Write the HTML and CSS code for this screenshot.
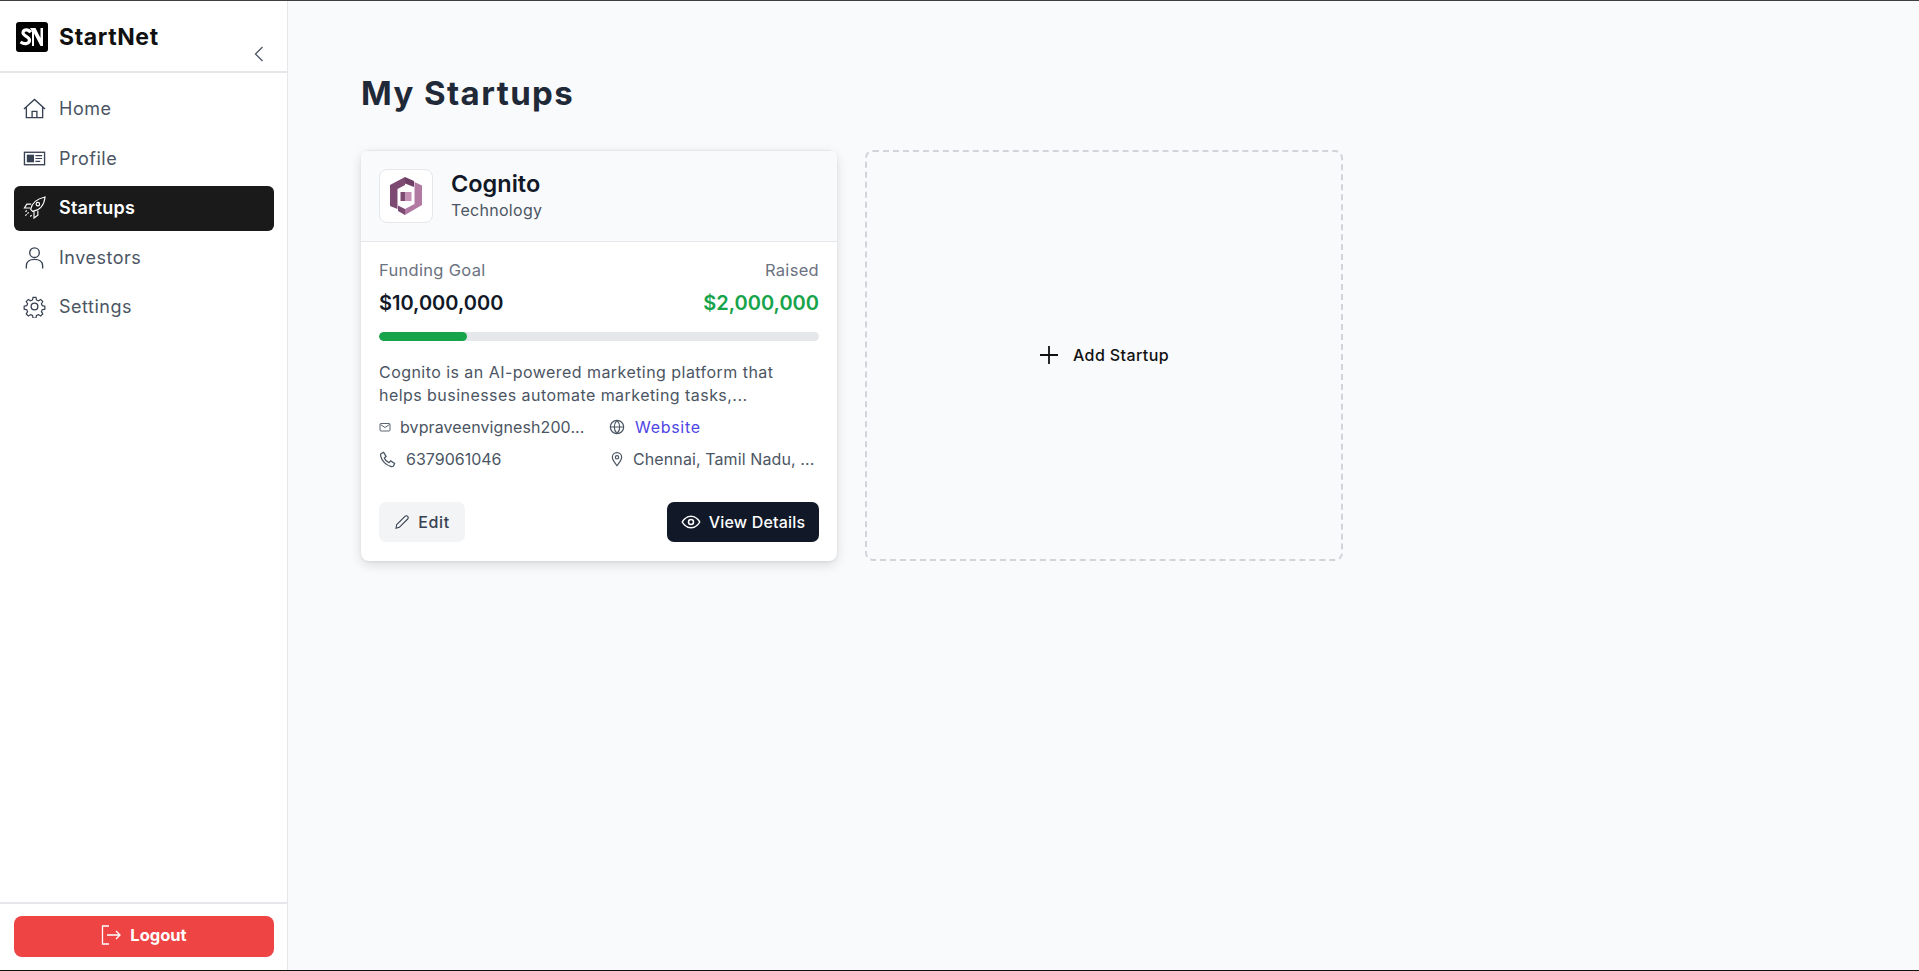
FILE: index.html
```html
<!DOCTYPE html>
<html lang="en">
<head>
<meta charset="utf-8">
<title>StartNet</title>
<link rel="stylesheet" href="styles.css">
</head>
<body>
<div class="app">
  <aside class="sidebar">
    <div class="brand">
      <div class="brand-row">
        <svg class="brand-logo" viewBox="0 0 32 30"><rect width="32" height="30" rx="3" fill="#000"/><path d="M14.500 10.500C13 7 7.500 7 7 10.500c-.4 3.500 6.500 4 6.500 7.500 0 3.500-4.500 5-9 2" fill="none" stroke="#fff" stroke-width="3.200"/><path d="M14 6h5.500l5 10V6h2.500v18h-2.500L18 11.500V24h-2V9.500z" fill="#fff"/></svg>
        <span class="brand-name">StartNet</span>
      </div>
      <svg class="collapse" viewBox="0 0 10 16"><path d="M8.500 1 1.500 8l7 7" fill="none" stroke="#4b5563" stroke-width="1.300"/></svg>
    </div>
    <nav class="nav">
      <a class="nav-item">
        <svg class="nav-icon" viewBox="0 0 24 24"><path d="M1 12.500 12 2.500l11 10M3.500 10v11.500h17V10M9.500 21.500V15h5v6.500" /></svg>
        <span>Home</span>
      </a>
      <a class="nav-item">
        <svg class="nav-icon" viewBox="0 0 24 24"><rect x="1.500" y="5.500" width="21" height="13" /><rect x="4" y="8" width="7.500" height="8" fill="#374151" stroke="none"/><path d="M13 9h7M13 12h7M13 15h5" stroke-width="1.200"/></svg>
        <span>Profile</span>
      </a>
      <a class="nav-item active">
        <svg class="nav-icon rocket" viewBox="0 0 24 24"><path d="M8 14c1-6 6-11 15-13-1 9-6 14-13 15zM8.500 8.500H4L1.500 12.500h6M15.500 15.500V20L11.500 23v-6.500"/><circle cx="15.500" cy="8.500" r="1.800"/><path d="M6 17l-4 4M4 15l-2 2M9 20l-2 2" stroke-dasharray="2 1"/></svg>
        <span>Startups</span>
      </a>
      <a class="nav-item">
        <svg class="nav-icon" viewBox="0 0 24 24"><circle cx="12" cy="7" r="5"/><path d="M3.500 23.500v-3c0-4 3.500-6.500 8.500-6.500s8.500 2.500 8.500 6.500v3"/></svg>
        <span>Investors</span>
      </a>
      <a class="nav-item">
        <svg class="nav-icon" viewBox="0 0 24 24"><circle cx="12" cy="12" r="3.500"/><path d="M10.300 2.500h3.400l.6 3 2.300 1 2.600-1.600 2.400 2.400-1.600 2.600 1 2.300 3 .6v3.400l-3 .6-1 2.300 1.600 2.600-2.400 2.400-2.600-1.600-2.300 1-.6 3h-3.400l-.6-3-2.300-1-2.600 1.600-2.400-2.400 1.600-2.600-1-2.300-3-.6v-3.400l3-.6 1-2.300-1.600-2.600 2.400-2.400 2.600 1.600 2.300-1z" transform="translate(1.200 .2) scale(.9)"/></svg>
        <span>Settings</span>
      </a>
    </nav>
    <div class="sidebar-foot">
      <button class="logout">
        <svg class="logout-icon" viewBox="0 0 20 20"><path d="M8 1H1.500v18H8M6 10h13M15 6l4 4-4 4"/></svg>
        Logout
      </button>
    </div>
  </aside>
  <main class="main">
    <h1 class="title">My Startups</h1>
    <div class="cards">
      <article class="card">
        <header class="card-head">
          <div class="card-logo">
            <svg viewBox="0 0 32 38" width="32" height="38">
              <path d="M15 0 0 8v21l7.500 3V12L15 8z" fill="#7d4a72"/>
              <path d="M15 0l9 4v6l-9-3.500z" fill="#6f3f66"/>
              <path d="M24.500 5l7.500 3.500V28L15 38v-6l9.500-5z" fill="#b27aa3"/>
              <path d="M8 28.500 15 32v6l-7-4z" fill="#7d4a72"/>
              <path d="M10.500 15h5v9h-5z" fill="#7d4a72"/>
              <path d="M15.500 15h6v9h-6z" fill="#c58fb6"/>
            </svg>
          </div>
          <div class="card-id">
            <h2 class="card-name">Cognito</h2>
            <p class="card-cat">Technology</p>
          </div>
        </header>
        <div class="card-body">
          <div class="split labels"><span>Funding Goal</span><span>Raised</span></div>
          <div class="split amounts"><span>$10,000,000</span><span class="raised">$2,000,000</span></div>
          <div class="progress"><div class="progress-fill" style="width:20%"></div></div>
          <p class="desc">Cognito is an AI-powered marketing platform that helps businesses automate marketing tasks,...</p>
          <div class="contacts">
            <div class="contact">
              <svg class="ci ci-sm" viewBox="0 0 24 24"><rect x="2" y="5" width="20" height="15" rx="2"/><path d="m3 7 9 6 9-6"/></svg>
              <span class="contact-text">bvpraveenvignesh200...</span>
            </div>
            <div class="contact">
              <svg class="ci" viewBox="0 0 24 24"><circle cx="12" cy="12" r="10"/><path d="M2 12h20M12 2c-5.500 6-5.500 14 0 20M12 2c5.500 6 5.500 14 0 20"/></svg>
              <span class="contact-text link">Website</span>
            </div>
            <div class="contact">
              <svg class="ci ci-lg" viewBox="0 0 24 24"><path d="M3 3.500 6.500 2 10 7.500 7.500 10c1 2.500 4 5.500 6.500 6.500l2.500-2.500 5.500 3.500-1.500 3.500c-1 1-2.500 1.200-4 .8C10 20 4 14 2.500 7.500 2.100 6 2 4.500 3 3.500z"/></svg>
              <span class="contact-text phone">6379061046</span>
            </div>
            <div class="contact place">
              <svg class="ci" viewBox="0 0 24 24"><path d="M12 22c-4-5-7-8.500-7-12.500a7 7 0 0 1 14 0c0 4-3 7.500-7 12.500z"/><circle cx="12" cy="9.500" r="2.500"/></svg>
              <span class="contact-text">Chennai, Tamil Nadu, ...</span>
            </div>
          </div>
          <div class="actions">
            <button class="btn btn-edit">
              <svg class="btn-icon" viewBox="0 0 24 24"><path d="M4 16 16.500 3.500a2.500 2.500 0 0 1 4 4L8 20l-5 1.500z"/></svg>
              Edit
            </button>
            <button class="btn btn-view">
              <svg class="btn-icon eye" viewBox="0 0 24 24"><path d="M1.500 12S5.500 5 12 5s10.500 7 10.500 7-4 7-10.500 7S1.500 12 1.500 12z"/><circle cx="12" cy="12" r="3"/></svg>
              View Details
            </button>
          </div>
        </div>
      </article>
      <button class="add-card">
        <svg class="add-icon" viewBox="0 0 20 20"><path d="M10 1v18M1 10h18"/></svg>
        Add Startup
      </button>
    </div>
  </main>
</div>
</body>
</html>
```
FILE: styles.css
```css
* { box-sizing: border-box; }
html { height: 971px; overflow: hidden; }
body {
  margin: 0;
  height: 971px;
  font-family: Inter, "Noto Sans", "Liberation Sans", sans-serif;
  color: #1f2937;
  background: #f9fafb;
  border-top: 1px solid #3f3f3f;
  border-bottom: 1px solid #111;
  overflow: hidden;
}
.app { display: flex; height: 969px; }

.sidebar {
  width: 288px;
  flex: none;
  background: #fff;
  border-right: 1px solid #e5e7eb;
  display: flex;
  flex-direction: column;
}
.brand {
  height: 72px;
  border-bottom: 2px solid #e5e7eb;
  padding: 21px 0 0 16px;
  display: flex;
  flex-direction: column;
}
.brand-row { display: flex; align-items: center; gap: 11px; }
.brand-logo { width: 32px; height: 30px; }
.brand-name { font-size: 23px; font-weight: 700; color: #111; letter-spacing: .6px; }
.collapse { width: 10px; height: 16px; margin: -6px 0 0 238px; }

.nav { display: flex; flex-direction: column; gap: 4.500px; padding: 14px 13px 0 14px; flex: 1; }
.nav-item {
  height: 45px;
  display: flex;
  align-items: center;
  gap: 13px;
  padding: 0 9px 2px;
  border-radius: 6px;
  color: #4b5563;
  font-size: 18px;
  letter-spacing: .5px;
}
.nav-item.active { background: #1a1a1a; color: #fff; font-weight: 600; letter-spacing: .2px; }
.nav-icon { width: 23px; height: 23px; fill: none; stroke: #374151; stroke-width: 1.400; flex: none; }
.active .nav-icon { stroke: #fff; }
.active .rocket { stroke-width: 1.200; }

.sidebar-foot { border-top: 2px solid #e5e7eb; padding: 12px 13px 13px 14px; }
.logout {
  width: 100%;
  height: 41px;
  border: 0;
  border-radius: 8px;
  padding: 0 0 3px;
  background: #ef4444;
  color: #fff;
  font: 700 16.500px Inter, sans-serif;
  display: flex;
  align-items: center;
  justify-content: center;
  gap: 9px;
}
.logout-icon { width: 20px; height: 20px; fill: none; stroke: #fff; stroke-width: 1.300; }

.main { flex: 1; padding: 70px 73px 0; }
.title { margin: 0 0 35px; font-size: 33px; line-height: 44px; font-weight: 700; color: #1f2937; letter-spacing: 1.400px; }
.cards { display: flex; gap: 28px; }

.card {
  width: 476px;
  height: 411px;
  background: #fff;
  border-radius: 8px;
  box-shadow: 0 4px 12px rgba(0,0,0,.12), 0 1px 3px rgba(0,0,0,.06);
  overflow: hidden;
  display: flex;
  flex-direction: column;
}
.card-head {
  height: 92px;
  background: #f9fafb;
  border-top: 1px solid #e5e7eb;
  border-bottom: 1px solid #e5e7eb;
  padding: 17px 18px;
  display: flex;
  gap: 18px;
  align-items: center;
}
.card-logo {
  width: 54px;
  height: 54px;
  flex: none;
  background: #fff;
  border: 1px solid #e5e7eb;
  border-radius: 8px;
  display: flex;
  align-items: center;
  justify-content: center;
}
.card-id { margin-top: -3px; }
.card-name { margin: 0; font-size: 23.500px; line-height: 30px; font-weight: 600; color: #111827; }
.card-cat { margin: 0; font-size: 16px; line-height: 22px; color: #4b5563; letter-spacing: .3px; }

.card-body { padding: 17px 18px 0; flex: 1; display: flex; flex-direction: column; }
.split { display: flex; justify-content: space-between; }
.labels { font-size: 16.500px; line-height: 22px; color: #6b7280; letter-spacing: .3px; }
.amounts { margin-top: 8px; font-size: 20px; line-height: 28px; font-weight: 600; color: #111827; }
.raised { color: #16a34a; }
.progress { margin-top: 15px; height: 9px; border-radius: 5px; background: #e5e7eb; overflow: hidden; }
.progress-fill { height: 100%; border-radius: 5px; background: #16a34a; }
.desc { margin: 20px 0 0; font-size: 16px; line-height: 23px; color: #4b5563; letter-spacing: .45px; }

.contacts { margin-top: 8px; display: grid; grid-template-columns: 230px 1fr; row-gap: 8px; column-gap: 0; }
.contact { display: flex; align-items: center; gap: 9px; height: 24px; min-width: 0; font-size: 16px; color: #4b5563; }
.place { gap: 8px; }
.contact-text { white-space: nowrap; letter-spacing: .1px; }
.phone { letter-spacing: 0; }
.ci { width: 16px; height: 16px; flex: none; fill: none; stroke: #4b5563; stroke-width: 1.800; }
.ci-sm { width: 12px; height: 12px; }
.ci-lg { width: 17px; height: 17px; margin-right: 1px; }
.link { color: #4f46e5; letter-spacing: .7px; margin-left: 1px; }

.actions { margin-top: auto; margin-bottom: 19px; display: flex; justify-content: space-between; }
.btn {
  height: 40px;
  border: 0;
  border-radius: 7px;
  font: 500 16px Inter, sans-serif;
  letter-spacing: .2px;
  display: flex;
  align-items: center;
  justify-content: center;
  gap: 8px;
}
.btn-edit { width: 86px; background: #f3f4f6; color: #374151; letter-spacing: .6px; }
.btn-view { width: 152px; background: #111827; color: #fff; }
.btn-icon { width: 16px; height: 16px; fill: none; stroke: currentColor; stroke-width: 1.600; }
.eye { width: 20px; height: 20px; stroke-width: 1.800; }

.add-card {
  width: 478px;
  height: 411px;
  padding: 0 0 2px;
  background: transparent;
  border: 2px dashed #d1d5db;
  border-radius: 8px;
  font: 500 16px Inter, sans-serif;
  letter-spacing: .4px;
  color: #111;
  display: flex;
  align-items: center;
  justify-content: center;
  gap: 14px;
}
.add-icon { width: 20px; height: 20px; fill: none; stroke: #111; stroke-width: 1.800; }
```
